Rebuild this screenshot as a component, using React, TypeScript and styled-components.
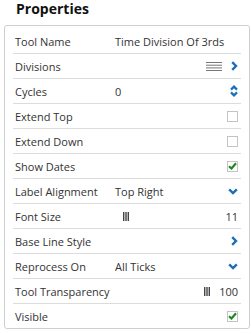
import React from 'react';
import styled, { createGlobalStyle } from 'styled-components';

const GlobalStyle = createGlobalStyle`
  body {
    margin: 0;
    background: #ffffff;
    font-family: 'Open Sans', 'Liberation Sans', sans-serif;
    color: #333333;
  }
`;

type Kind = 'text' | 'list' | 'spin' | 'check' | 'select' | 'slider' | 'link';

type Prop = {
  label: string;
  value?: string;
  kind: Kind;
  checked?: boolean;
  num?: string;
};

const rows: Prop[] = [
  { label: 'Tool Name', value: 'Time Division Of 3rds', kind: 'text' },
  { label: 'Divisions', kind: 'list' },
  { label: 'Cycles', value: '0', kind: 'spin' },
  { label: 'Extend Top', kind: 'check', checked: false },
  { label: 'Extend Down', kind: 'check', checked: false },
  { label: 'Show Dates', kind: 'check', checked: true },
  { label: 'Label Alignment', value: 'Top Right', kind: 'select' },
  { label: 'Font Size', kind: 'slider', num: '11', value: 'bars' },
  { label: 'Base Line Style', kind: 'link' },
  { label: 'Reprocess On', value: 'All Ticks', kind: 'select' },
  { label: 'Tool Transparency', kind: 'slider', num: '100' },
  { label: 'Visible', kind: 'check', checked: true },
];

const ChevronRight = () => (
  <svg width="7" height="10" viewBox="0 0 7 10">
    <path d="M1.2 1.2 L5 5 L1.2 8.8" fill="none" stroke="#1b6fb8" strokeWidth="2.4" />
  </svg>
);

const ChevronDown = () => (
  <svg width="10" height="7" viewBox="0 0 10 7">
    <path d="M1.2 1.3 L5 5 L8.8 1.3" fill="none" stroke="#1b6fb8" strokeWidth="2.4" />
  </svg>
);

const Spinner = () => (
  <svg width="8" height="12" viewBox="0 0 8 12">
    <path d="M1 4.6 L4 1.6 L7 4.6" fill="none" stroke="#1b6fb8" strokeWidth="2.2" />
    <path d="M1 7.4 L4 10.4 L7 7.4" fill="none" stroke="#1b6fb8" strokeWidth="2.2" />
  </svg>
);

const Lines = () => (
  <svg width="16" height="9" viewBox="0 0 16 9">
    <rect x="0" y="0" width="16" height="1" fill="#777" />
    <rect x="0" y="2.7" width="16" height="1" fill="#777" />
    <rect x="0" y="5.4" width="16" height="1" fill="#777" />
    <rect x="0" y="8" width="16" height="1" fill="#777" />
  </svg>
);

const Bars = () => (
  <svg width="6" height="9" viewBox="0 0 6 9">
    <rect x="0" y="0" width="1.4" height="9" fill="#444" />
    <rect x="2.3" y="0" width="1.4" height="9" fill="#444" />
    <rect x="4.6" y="0" width="1.4" height="9" fill="#444" />
  </svg>
);

const App: React.FC = () => {
  return (
    <>
      <GlobalStyle />
      <Title>Properties</Title>
      <Panel>
        {rows.map((r) => (
          <Row key={r.label}>
            <Label>{r.label}</Label>
            <Value>
              {r.value === 'bars' ? (
                <BarsWrap>
                  <Bars />
                </BarsWrap>
              ) : (
                r.value
              )}
            </Value>
            <Control>
              {r.kind === 'list' && (
                <>
                  <Lines />
                  <ChevronRight />
                </>
              )}
              {r.kind === 'spin' && <Spinner />}
              {r.kind === 'check' && (
                <CheckBox>
                  {r.checked && (
                    <svg width="9" height="8" viewBox="0 0 9 8">
                      <path d="M1 4.2 L3.5 6.5 L8 1.3" fill="none" stroke="#1d8a1d" strokeWidth="2.2" />
                    </svg>
                  )}
                </CheckBox>
              )}
              {r.kind === 'select' && <ChevronDown />}
              {r.kind === 'link' && <ChevronRight />}
              {r.kind === 'slider' && (
                <>
                  {!r.value && <Bars />}
                  <Num>{r.num}</Num>
                </>
              )}
            </Control>
          </Row>
        ))}
      </Panel>
    </>
  );
};

const Title = styled.div`
  height: 25px;
  padding-left: 16px;
  font-size: 14px;
  font-weight: 700;
  line-height: 17px;
  color: #111;
`;

const Panel = styled.div`
  width: 244px;
  margin-left: 4px;
  border: 1px solid #cfcfcf;
  border-radius: 3px;
  padding: 3px 8px 0;
  box-sizing: border-box;
  width: 246px;
  height: 304px;
`;

const Row = styled.div`
  display: flex;
  align-items: center;
  height: 24px;
  padding: 0 3px 0 2px;
  border-bottom: 1px solid #dcdcdc;
  font-size: 11px;
  &:last-child {
    border-bottom: none;
  }
`;

const Label = styled.div`
  width: 100px;
  flex: none;
  white-space: nowrap;
`;

const Value = styled.div`
  flex: 1;
  white-space: nowrap;
`;

const BarsWrap = styled.span`
  display: inline-flex;
  padding-left: 8px;
`;

const Control = styled.div`
  display: flex;
  align-items: center;
  gap: 9px;
`;

const CheckBox = styled.div`
  width: 11px;
  height: 11px;
  border: 1px solid #c4c4c4;
  box-sizing: border-box;
  display: flex;
  align-items: center;
  justify-content: center;
  margin-right: 0px;
`;

const Num = styled.span`
  font-size: 11px;
`;

export default App;
